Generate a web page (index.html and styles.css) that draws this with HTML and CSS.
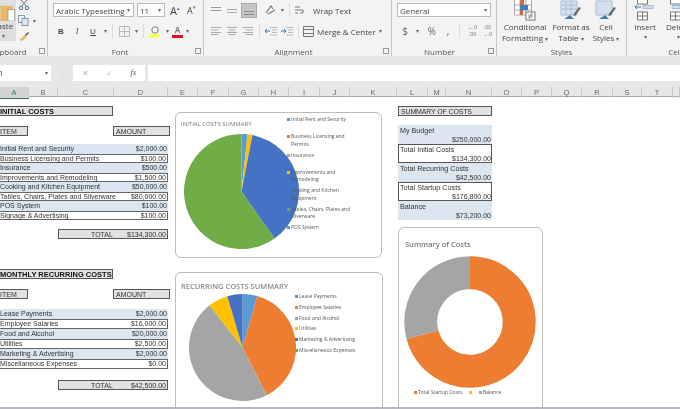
FILE: index.html
```html
<!DOCTYPE html>
<html>
<head>
  <meta charset="utf-8">
  <title>Startup Costs</title>
  <link rel="stylesheet" href="styles.css">
</head>
<body>

<div class="ribbon">

  <div class="group clipboard">
    <div class="group-body clip-body">
      <div class="paste">
        <svg width="16" height="18" viewBox="0 0 16 18"><rect x="0" y="2" width="13" height="16" fill="#e8b864"/><path d="M8 6h7v12H8z" fill="#fff" stroke="#888" stroke-width=".7"/></svg>
        <span>Paste</span>
        <span class="dd">&#9662;</span>
      </div>
      <div class="clip-tools">
        <svg width="12" height="10" viewBox="0 0 12 10"><path d="M3 0l5 6M9 0L4 6" stroke="#777" fill="none"/><circle cx="3" cy="8" r="1.7" fill="none" stroke="#4a6f9c"/><circle cx="9" cy="8" r="1.7" fill="none" stroke="#4a6f9c"/></svg>
        <div class="copy-row">
          <svg width="11" height="11" viewBox="0 0 11 11"><rect x=".5" y=".5" width="6" height="7" fill="#eef" stroke="#89a"/><rect x="4" y="3.5" width="6" height="7" fill="#dde8f4" stroke="#89a"/></svg>
          <span class="dd">&#9662;</span>
        </div>
        <svg width="12" height="11" viewBox="0 0 12 11"><path d="M1 9l6-5 2 2-5 4z" fill="#e8b864"/><path d="M7 4l3-3 1 1-3 3z" fill="#555"/></svg>
      </div>
    </div>
    <div class="group-label clip-label">Clipboard<span class="launcher"></span></div>
  </div>

  <div class="group font">
    <div class="group-body">
      <div class="row">
        <div class="select font-name">Arabic Typesetting<span class="dd">&#9662;</span></div>
        <div class="select font-size">11<span class="dd">&#9662;</span></div>
        <span class="grow-a">A<sup>&#9652;</sup></span>
        <span class="grow-a small-a">A<sup>&#9662;</sup></span>
      </div>
      <div class="row row-two">
        <span class="tool bold">B</span>
        <span class="tool italic">I</span>
        <span class="tool under">U</span>
        <span class="dd tool-dd">&#9662;</span>
        <span class="sep"></span>
        <span class="tool"><svg width="11" height="11" viewBox="0 0 11 11"><path d="M.5.5h10v10H.5zM5.5.5v10M.5 5.5h10" fill="none" stroke="#bbb"/></svg></span>
        <span class="dd tool-dd">&#9662;</span>
        <span class="sep"></span>
        <span class="tool"><svg width="12" height="12" viewBox="0 0 12 12"><circle cx="6" cy="5" r="3.2" fill="#fff" stroke="#777"/><rect x="1" y="9" width="10" height="3" fill="#ffff3c"/></svg></span>
        <span class="dd tool-dd">&#9662;</span>
        <span class="tool color-a">A</span>
        <span class="dd tool-dd">&#9662;</span>
      </div>
    </div>
    <div class="group-label font-label">Font<span class="launcher"></span></div>
  </div>

  <div class="group alignment">
    <div class="group-body">
      <div class="row">
        <span class="tool"><svg width="10" height="7" viewBox="0 0 10 7"><path d="M0 .5h10M0 3.5h10" stroke="#999"/></svg></span>
        <span class="tool"><svg width="10" height="7" viewBox="0 0 10 7"><path d="M0 2.5h10M0 5.5h10" stroke="#aaa"/></svg></span>
        <span class="tool picked"><svg width="10" height="7" viewBox="0 0 10 7"><path d="M0 3.5h10M0 6.5h10" stroke="#888"/></svg></span>
        <span class="tool orient"><svg width="11" height="11" viewBox="0 0 11 11"><path d="M1 8l5-7 2 3M3 9l7-4" stroke="#777" fill="none" stroke-width="1.2"/></svg></span>
        <span class="dd tool-dd">&#9662;</span>
        <span class="sep"></span>
        <svg class="wrap-icon" width="10" height="11" viewBox="0 0 10 11"><path d="M1 2h5M1 5h8v3H6M1 8h3" stroke="#777" fill="none"/></svg>
        <span class="tool-text">Wrap Text</span>
      </div>
      <div class="row row-two">
        <span class="tool"><svg width="10" height="8" viewBox="0 0 10 8"><path d="M0 .5h10M0 3h7M0 5.500h10M0 7.500h7" stroke="#aaa"/></svg></span>
        <span class="tool"><svg width="10" height="8" viewBox="0 0 10 8"><path d="M0 .5h10M1.500 3h7M0 5.500h10M1.500 7.500h7" stroke="#aaa"/></svg></span>
        <span class="tool"><svg width="10" height="8" viewBox="0 0 10 8"><path d="M0 .5h10M3 3h7M0 5.500h10M3 7.500h7" stroke="#aaa"/></svg></span>
        <span class="sep"></span>
        <span class="tool"><svg width="12" height="9" viewBox="0 0 12 9"><path d="M5 .5h7M7 3h5M7 5.500h5M5 8h7" stroke="#bbb"/><path d="M0 4h5M2 2L0 4l2 2" stroke="#3a75b0" fill="none"/></svg></span>
        <span class="tool"><svg width="12" height="9" viewBox="0 0 12 9"><path d="M5 .5h7M7 3h5M7 5.500h5M5 8h7" stroke="#bbb"/><path d="M0 4h5M3 2l2 2-2 2" stroke="#3a75b0" fill="none"/></svg></span>
        <span class="sep"></span>
        <svg class="merge-icon" width="11" height="11" viewBox="0 0 11 11"><path d="M.5.5h10v10H.5zM.5 3.500h10M.5 7.500h10" fill="none" stroke="#777"/></svg>
        <span class="tool-text merge-text">Merge &amp; Center</span>
        <span class="dd">&#9662;</span>
      </div>
    </div>
    <div class="group-label align-label">Alignment<span class="launcher"></span></div>
  </div>

  <div class="group number">
    <div class="group-body">
      <div class="row">
        <div class="select number-format">General<span class="dd">&#9662;</span></div>
      </div>
      <div class="row row-two">
        <span class="tool num-sym">$</span>
        <span class="dd tool-dd">&#9662;</span>
        <span class="tool num-sym percent">%</span>
        <span class="tool num-sym">,</span>
        <span class="sep"></span>
        <span class="tool dec first-dec"><b>&larr;</b>.0<br>.00</span>
        <span class="tool dec">.00<br><b>&rarr;</b>.0</span>
      </div>
    </div>
    <div class="group-label number-label">Number<span class="launcher"></span></div>
  </div>

  <div class="group styles">
    <div class="group-body big-tools">
      <div class="big-tool cond">
        <svg width="22" height="21" viewBox="0 0 22 21"><path d="M.5 0v15h17V0M6 0v15M12 0v15M.5 5h17M.5 10h17" fill="#fff" stroke="#aaa"/><rect x="6" y="0" width="4" height="5" fill="#d9693a"/><rect x="6" y="5" width="8" height="5" fill="#3f7fc0"/><rect x="6" y="10" width="3" height="5" fill="#d9693a"/><rect x="12" y="12" width="9" height="8" fill="#fff" stroke="#777"/><path d="M14 15h5M14 17h5M18 13l-3 6" stroke="#555" stroke-width=".6"/></svg>
        <span>Conditional</span>
        <span>Formatting <i class="dd">&#9662;</i></span>
      </div>
      <div class="big-tool table">
        <svg width="22" height="21" viewBox="0 0 22 21"><path d="M1 1h16v14H1zM1 5h16M1 9h16M6 1v14M11 1v14" fill="#d3e0ee" stroke="#a9bdd0"/><path d="M4 19l6-4 4 4z" fill="#3f7fc0"/><path d="M13 15l6-8 2 1-6 8z" fill="#666"/></svg>
        <span>Format as</span>
        <span>Table <i class="dd">&#9662;</i></span>
      </div>
      <div class="big-tool cell">
        <svg width="22" height="21" viewBox="0 0 22 21"><path d="M1 1h16v14H1z" fill="#d3e0ee" stroke="#a9bdd0"/><path d="M4 19l6-4 4 4z" fill="#3f7fc0"/><path d="M13 15l6-8 2 1-6 8z" fill="#666"/></svg>
        <span>Cell</span>
        <span>Styles <i class="dd">&#9662;</i></span>
      </div>
    </div>
    <div class="group-label">Styles</div>
  </div>

  <div class="group cells">
    <div class="group-body big-tools">
      <div class="big-tool insert">
        <svg width="22" height="21" viewBox="0 0 22 21"><path d="M3.500 0v4h10V0M3.500 12h10v8h-10zM8.500 12v8M3.500 16h10" fill="#fff" stroke="#777"/><path d="M1 7h6M3 5L1 7l2 2" stroke="#3a75b0" fill="none"/><path d="M9 5.500h10v3H9z" fill="#cfe0f0" stroke="#a9bdd0"/></svg>
        <span>Insert</span>
        <i class="dd">&#9662;</i>
      </div>
      <div class="big-tool delete">
        <svg width="22" height="21" viewBox="0 0 22 21"><path d="M3.500 0v4h10V0M3.500 12h10v8h-10zM8.500 12v8M3.500 16h10" fill="#fff" stroke="#777"/><path d="M5 5.500h8v3H5z" fill="#cfe0f0" stroke="#a9bdd0"/><path d="M15 4l4 3-4 3" stroke="#d9693a" fill="none" stroke-width="1.400"/></svg>
        <span>Delete</span>
        <i class="dd">&#9662;</i>
      </div>
    </div>
    <div class="group-label cells-label">Cells</div>
  </div>
</div>

<div class="formula-bar">
  <div class="name-box">A1<span class="dd">&#9662;</span></div>
  <div class="grip">&#8942;</div>
  <div class="fx-box">
    <span class="fx-mark">&#10005;</span>
    <span class="fx-mark">&#10003;</span>
    <span class="fx-text">fx</span>
  </div>
  <div class="formula-input"></div>
</div>

<div class="col-heads">
  <span class="picked-col">A</span><span>B</span><span>C</span><span>D</span><span>E</span><span>F</span><span>G</span><span>H</span><span>I</span><span>J</span><span>K</span><span>L</span><span>M</span><span>N</span><span>O</span><span>P</span><span>Q</span><span>R</span><span>S</span><span>T</span><span></span>
</div>

<div class="sheet">

  <div class="costs">
    <div class="cost-block">
      <div class="boxed block-title">INITIAL COSTS</div>
      <div class="head-row"><div class="boxed item-head">ITEM</div><div class="boxed amount-head">AMOUNT</div></div>
      <div class="cost-row"><span>Initial Rent and Security</span><span>$2,000.00</span></div>
      <div class="cost-row"><span>Business Licensing and Permits</span><span>$100.00</span></div>
      <div class="cost-row"><span>Insurance</span><span>$500.00</span></div>
      <div class="cost-row"><span>Improvements and Remodeling</span><span>$1,500.00</span></div>
      <div class="cost-row"><span>Cooking and Kitchen Equipment</span><span>$50,000.00</span></div>
      <div class="cost-row"><span>Tables, Chairs, Plates and Silverware</span><span>$80,000.00</span></div>
      <div class="cost-row"><span>POS System</span><span>$100.00</span></div>
      <div class="cost-row"><span>Signage &amp; Advertising</span><span>$100.00</span></div>
      <div class="boxed total-row"><span>TOTAL</span><span>$134,300.00</span></div>
    </div>

    <div class="cost-block monthly">
      <div class="boxed block-title">MONTHLY RECURRING COSTS</div>
      <div class="head-row"><div class="boxed item-head">ITEM</div><div class="boxed amount-head">AMOUNT</div></div>
      <div class="cost-row"><span>Lease Payments</span><span>$2,000.00</span></div>
      <div class="cost-row"><span>Employee Salaries</span><span>$16,000.00</span></div>
      <div class="cost-row"><span>Food and Alcohol</span><span>$20,000.00</span></div>
      <div class="cost-row"><span>Utilities</span><span>$2,500.00</span></div>
      <div class="cost-row"><span>Marketing &amp; Advertising</span><span>$2,000.00</span></div>
      <div class="cost-row"><span>Miscellaneous Expenses</span><span>$0.00</span></div>
      <div class="boxed total-row"><span>TOTAL</span><span>$42,500.00</span></div>
    </div>
  </div>

  <div class="charts">
    <div class="chart chart-initial">
      <div class="chart-title">INITIAL COSTS SUMMARY</div>
      <svg class="pie" viewBox="-100 -100 200 200">
        <path d="M0 0L0 -100A100 100 0 0 1 10.45 -99.45Z" fill="#5b9bd5"/>
        <path d="M0 0L10.45 -99.45A100 100 0 0 1 19.08 -98.16Z" fill="#ffc000"/>
        <path d="M0 0L19.08 -98.16A100 100 0 0 1 57.36 81.92Z" fill="#4472c4"/>
        <path d="M0 0L57.36 81.92A100 100 0 1 1 0 -100Z" fill="#70ad47"/>
      </svg>
      <div class="legend">
        <div class="key spaced"><i class="blue"></i>Initial Rent and Security</div>
        <div class="key"><i class="orange"></i>Business Licensing and<br>Permits</div>
        <div class="key spaced"><i class="gray"></i>Insurance</div>
        <div class="key"><i class="yellow"></i>Improvements and<br>Remodeling</div>
        <div class="key"><i class="navy"></i>Cooking and Kitchen<br>Equipment</div>
        <div class="key"><i class="green"></i>Tables, Chairs, Plates and<br>Silverware</div>
        <div class="key"><i class="blue"></i>POS System</div>
      </div>
    </div>

    <div class="chart chart-recurring">
      <div class="chart-title">RECURRING COSTS SUMMARY</div>
      <svg class="pie" viewBox="-100 -100 200 200">
        <path d="M0 0L0 -100A100 100 0 0 1 27.56 -96.13Z" fill="#5b9bd5"/>
        <path d="M0 0L27.56 -96.13A100 100 0 0 1 45.4 89.1Z" fill="#ed7d31"/>
        <path d="M0 0L45.4 89.1A100 100 0 0 1 -61.57 -78.8Z" fill="#a5a5a5"/>
        <path d="M0 0L-61.57 -78.8A100 100 0 0 1 -28.4 -95.88Z" fill="#ffc000"/>
        <path d="M0 0L-28.4 -95.88A100 100 0 0 1 0 -100Z" fill="#4472c4"/>
      </svg>
      <div class="legend">
        <div class="key"><i class="blue"></i>Lease Payments</div>
        <div class="key"><i class="orange"></i>Employee Salaries</div>
        <div class="key"><i class="gray"></i>Food and Alcohol</div>
        <div class="key"><i class="yellow"></i>Utilities</div>
        <div class="key"><i class="navy"></i>Marketing &amp; Advertising</div>
        <div class="key"><i class="green"></i>Miscellaneous Expenses</div>
      </div>
    </div>
  </div>

  <div class="summary">
    <div class="boxed summary-title">SUMMARY OF COSTS</div>
    <div class="summary-list">
      <div class="sum-item"><div>My Budget</div><div class="sum-value">$250,000.00</div></div>
      <div class="sum-item framed"><div>Total Initial Costs</div><div class="sum-value">$134,300.00</div></div>
      <div class="sum-item"><div>Total Recurring Costs</div><div class="sum-value">$42,500.00</div></div>
      <div class="sum-item framed"><div>Total Startup Costs</div><div class="sum-value">$176,800.00</div></div>
      <div class="sum-item"><div>Balance</div><div class="sum-value">$73,200.00</div></div>
    </div>

    <div class="chart chart-donut">
      <div class="chart-title">Summary of Costs</div>
      <svg class="donut" viewBox="-66 -66 132 132">
        <path d="M0 -49.2A49.2 49.2 0 1 1 -47.52 12.73" fill="none" stroke="#ed7d31" stroke-width="33"/>
        <path d="M-47.52 12.73A49.2 49.2 0 0 1 0 -49.2" fill="none" stroke="#a5a5a5" stroke-width="33"/>
      </svg>
      <div class="donut-legend">
        <div class="key"><i class="orange"></i>Total Startup Costs</div>
        <div class="key"><i class="yellow"></i></div>
        <div class="key"><i class="gray"></i>Balance</div>
      </div>
    </div>
  </div>
</div>

<div class="status-edge"></div>

</body>
</html>
```

FILE: styles.css
```css
html, body {
    margin: 0;
    height: 409px;
    overflow: hidden;
    background: white;
    font-family: "Open Sans", "Noto Sans", sans-serif;
    color: #444;
}

body {
    filter: blur(.3px);
}

/* ribbon */
.ribbon {
    display: flex;
    height: 56px;
    background: #f3f3f3;
    overflow: hidden;
    font-size: 8px;
    white-space: nowrap;
}

.group {
    display: flex;
    flex-direction: column;
    border-right: 1px solid #c8c8c8;
    box-sizing: border-box;
    flex: none;
}

.group-body {
    height: 47px;
}

.group-label {
    position: relative;
    height: 9px;
    line-height: 9px;
    text-align: center;
    color: #555;
}

.launcher {
    position: absolute;
    right: 2px;
    top: 1px;
    width: 4px;
    height: 4px;
    border: 1px solid #999;
}

.clipboard { width: 58px; margin-left: -10px; }
.font { width: 156px; padding-left: 5px; }
.alignment { width: 188px; padding-left: 4px; }
.number { width: 105px; padding-left: 5px; }
.styles { width: 130px; }
.cells { width: 80px; border-right: 0; }

.clip-label { padding-right: 20px; }
.font-label { padding-right: 16px; }
.align-label { padding-right: 12px; }
.number-label { padding-right: 14px; }

.clip-body {
    display: flex;
}

.paste {
    width: 26px;
    height: 41px;
    background: #dfdfdf;
    display: flex;
    flex-direction: column;
    align-items: flex-end;
    text-align: center;
    flex: none;
}

.paste svg {
    margin-top: 4px;
}

.paste span {
    width: 26px;
    line-height: 10px;
}

.clip-tools {
    display: flex;
    flex-direction: column;
    gap: 5px;
    padding-left: 2px;
}

.copy-row {
    display: flex;
    gap: 4px;
    align-items: center;
}

.dd {
    font-size: 6px;
    font-style: normal;
    color: #666;
}

.row {
    display: flex;
    align-items: center;
    height: 14px;
    margin-top: 3px;
}

.row-two {
    margin-top: 7px;
}

.select {
    display: flex;
    justify-content: space-between;
    align-items: center;
    height: 14px;
    padding: 0 3px 0 2px;
    background: white;
    border: 1px solid #bbb;
    box-sizing: border-box;
}

.font-name { width: 81px; }
.font-size { width: 28px; margin-left: 3px; }
.number-format { width: 94px; }

.grow-a {
    font-size: 11px;
    margin-left: 5px;
    width: 13px;
}

.small-a {
    font-size: 9px;
    margin-left: 4px;
}

.grow-a sup {
    font-size: 5px;
    color: #3a75b0;
    vertical-align: 5px;
    line-height: 0;
}

.tool {
    display: flex;
    justify-content: center;
    align-items: center;
    width: 16px;
    height: 14px;
}

.tool-dd {
    width: 8px;
    text-align: center;
}

.bold { font-weight: bold; font-family: "Liberation Sans", sans-serif; }
.italic { font-style: italic; font-family: "Liberation Serif", serif; }
.under { text-decoration: underline; font-family: "Liberation Sans", sans-serif; }

.color-a {
    font-weight: bold;
    line-height: 10px;
    height: 11px;
    margin-left: 1px;
    border-bottom: 3px solid #e2101a;
    color: #777;
    width: 11px;
}

.sep {
    width: 1px;
    height: 14px;
    margin: 0 3px;
    background: #dcdcdc;
}

.picked {
    background: #c6c6c6;
    border: 1px solid #aaa;
    box-sizing: border-box;
    height: 15px;
    margin-left: 1px;
    align-items: flex-end;
    padding-bottom: 2px;
}

.orient {
    margin-left: 5px;
}

.wrap-icon {
    margin-left: 1px;
}

.tool-text {
    margin-left: 9px;
}

.merge-icon {
    margin-left: 1px;
}

.merge-text {
    margin: 0 3px 0 3px;
}

.num-sym {
    font-size: 10px;
    color: #666;
}

.percent { margin-left: 3px; }

.dec {
    display: block;
    font-size: 5px;
    line-height: 7px;
    text-align: center;
    color: #666;
    width: 15px;
}

.dec b {
    color: #3a75b0;
    font-weight: normal;
}

.first-dec { margin-left: 2px; }

.big-tools {
    display: flex;
    padding-left: 5px;
}

.big-tool {
    display: flex;
    flex-direction: column;
    align-items: center;
    width: 46px;
    line-height: 11px;
}

.big-tool svg {
    height: 21px;
}

.table { width: 46px; }
.cell { width: 30px; margin-left: -3px; }
.cells .big-tools { padding-left: 0; }
.insert { width: 36px; }
.delete { width: 30px; }
.cells-label { width: 100px; }

/* formula bar */
.formula-bar {
    display: flex;
    align-items: center;
    height: 25px;
    padding-top: 8px;
    box-sizing: border-box;
    background: #e7e7e7;
    font-size: 8px;
}

.name-box {
    display: flex;
    justify-content: space-between;
    align-items: center;
    width: 54px;
    height: 16px;
    margin-left: -9px;
    padding: 0 3px;
    background: white;
}

.grip {
    width: 22px;
    text-align: center;
    color: #bbb;
}

.fx-box {
    display: flex;
    align-items: center;
    justify-content: space-around;
    width: 72px;
    height: 16px;
    background: white;
    color: #bbb;
}

.fx-text {
    font-family: "Liberation Serif", serif;
    font-style: italic;
    color: #555;
}

.formula-input {
    flex: 1;
    height: 16px;
    margin-left: 3px;
    background: white;
}

/* sheet */
.col-heads {
    display: grid;
    grid-template-columns: 29px 29px 56px 54px 30px 31px 30px 30px 31px 30px 47px 31px 18px 46px 30px 30px 30px 31px 29px 31px 1fr;
    height: 16px;
    padding-top: 6px;
    box-sizing: border-box;
    background: #e7e7e7;
    border-bottom: 1px solid #aaa;
    font-size: 7.5px;
    line-height: 11px;
    text-align: center;
    color: #666;
    font-family: "Liberation Sans", sans-serif;
}

.col-heads span {
    border-right: 1px solid #c8c8c8;
}

.col-heads .picked-col {
    background: #d4d4d4;
    color: #2f7d4f;
    box-shadow: 0 1px 0 #2f7d4f;
}

.sheet {
    display: flex;
    height: 310px;
    overflow: hidden;
    font-family: "Liberation Sans", sans-serif;
    font-size: 7px;
    color: #333;
}

.boxed {
    height: 10px;
    line-height: 9px;
    box-sizing: border-box;
    background: #e2e2e2;
    border: 1px solid #555;
}

.costs {
    width: 174px;
    flex: none;
    padding-top: 9px;
}

.monthly {
    margin-top: 30px;
}

.block-title {
    width: 114px;
    font-size: 7.500px;
    font-weight: bold;
    color: #111;
    margin-left: -1px;
}

.head-row {
    display: flex;
    justify-content: space-between;
    width: 171px;
    margin: 10px 0 8px -1px;
}

.monthly .head-row {
    margin-bottom: 10px;
}

.item-head { width: 29px; }
.amount-head { width: 57px; padding-left: 2px; }

.cost-row {
    display: flex;
    justify-content: space-between;
    width: 168px;
    height: 9.500px;
    line-height: 9px;
    box-sizing: border-box;
    padding-right: 1px;
    white-space: nowrap;
}

.monthly .cost-row {
    height: 10px;
}

.cost-row:nth-child(odd) {
    background: #dce6f1;
}

.cost-row:nth-child(even) {
    border-top: 1px solid #666;
    border-bottom: 1px solid #666;
    border-right: 1px solid #666;
    line-height: 8px;
}

.total-row {
    display: flex;
    justify-content: space-between;
    width: 110px;
    margin: 9px 0 0 58px;
    padding: 0 1px 0 32px;
}

.monthly .total-row {
    margin-top: 11px;
}

/* charts */
.charts {
    width: 208px;
    flex: none;
    padding-top: 15px;
    margin-left: 1px;
}

.chart {
    position: relative;
    box-sizing: border-box;
    background: white;
    border: 1px solid #bbb;
    border-radius: 6px;
    font-family: "Open Sans", "Noto Sans", sans-serif;
    color: #666;
}

.chart-initial {
    width: 207px;
    height: 146px;
    padding: 8px 5px 0;
}

.chart-initial .chart-title {
    font-size: 6px;
    line-height: 7px;
    color: #777;
}

.chart-initial .pie {
    display: block;
    width: 115px;
    height: 115px;
    margin: 6px 0 0 3px;
}

.chart-recurring {
    width: 208px;
    height: 175px;
    margin-top: 14px;
    padding: 8px 5px 0;
}

.chart-recurring .chart-title {
    font-size: 7.500px;
    line-height: 10px;
    font-weight: 600;
    color: #888;
}

.chart-recurring .pie {
    display: block;
    width: 107px;
    height: 107px;
    margin: 3px 0 0 8px;
}

.legend {
    position: absolute;
    top: 3px;
    left: 111px;
    font-size: 5px;
    line-height: 7.500px;
    color: #555;
}

.chart-initial .legend {
    display: flex;
    flex-direction: column;
    gap: 3.500px;
}

.chart-initial .key.spaced {
    margin-bottom: 6px;
}

.chart-recurring .legend {
    top: 18px;
    left: 119px;
    line-height: 10.800px;
}

.key {
    position: relative;
    padding-left: 4px;
    white-space: nowrap;
    box-sizing: border-box;
}

.key i {
    position: absolute;
    left: 0;
    top: 2px;
    width: 3px;
    height: 3px;
}

.chart-recurring .key i {
    top: 4px;
}

.blue { background: #5b9bd5; }
.orange { background: #ed7d31; }
.gray { background: #a5a5a5; }
.yellow { background: #ffc000; }
.navy { background: #4472c4; }
.green { background: #70ad47; }

/* summary */
.summary {
    width: 146px;
    flex: none;
    margin-left: 15px;
    padding-top: 9px;
}

.summary-title {
    width: 94px;
    padding-left: 2px;
    letter-spacing: -.15px;
}

.summary-list {
    width: 94px;
    margin-top: 9px;
    background: #dce6f1;
    font-size: 7.200px;
}

.sum-item {
    height: 19px;
    padding: 2px 1px 0 2px;
    box-sizing: border-box;
    line-height: 8.500px;
    white-space: nowrap;
}

.framed {
    background: white;
    border: 1px solid #555;
    padding: 1px 0 0 1px;
}

.sum-value {
    font-size: 7px;
    text-align: right;
}

.chart-donut {
    width: 145px;
    height: 185px;
    margin-top: 7px;
}

.chart-donut .chart-title {
    font-size: 7.500px;
    line-height: 10px;
    font-weight: 600;
    margin: 11px 0 0 6px;
    color: #777;
}

.donut {
    display: block;
    width: 132px;
    height: 132px;
    margin: 7px 0 0 5px;
}

.donut-legend {
    display: flex;
    margin: 1px 0 0 15px;
    font-size: 5px;
    line-height: 7px;
    color: #555;
}

.donut-legend .key:nth-child(1) { width: 55px; }
.donut-legend .key:nth-child(2) { width: 10px; }

.status-edge {
    height: 2px;
    background: #b8b8c0;
}
```
